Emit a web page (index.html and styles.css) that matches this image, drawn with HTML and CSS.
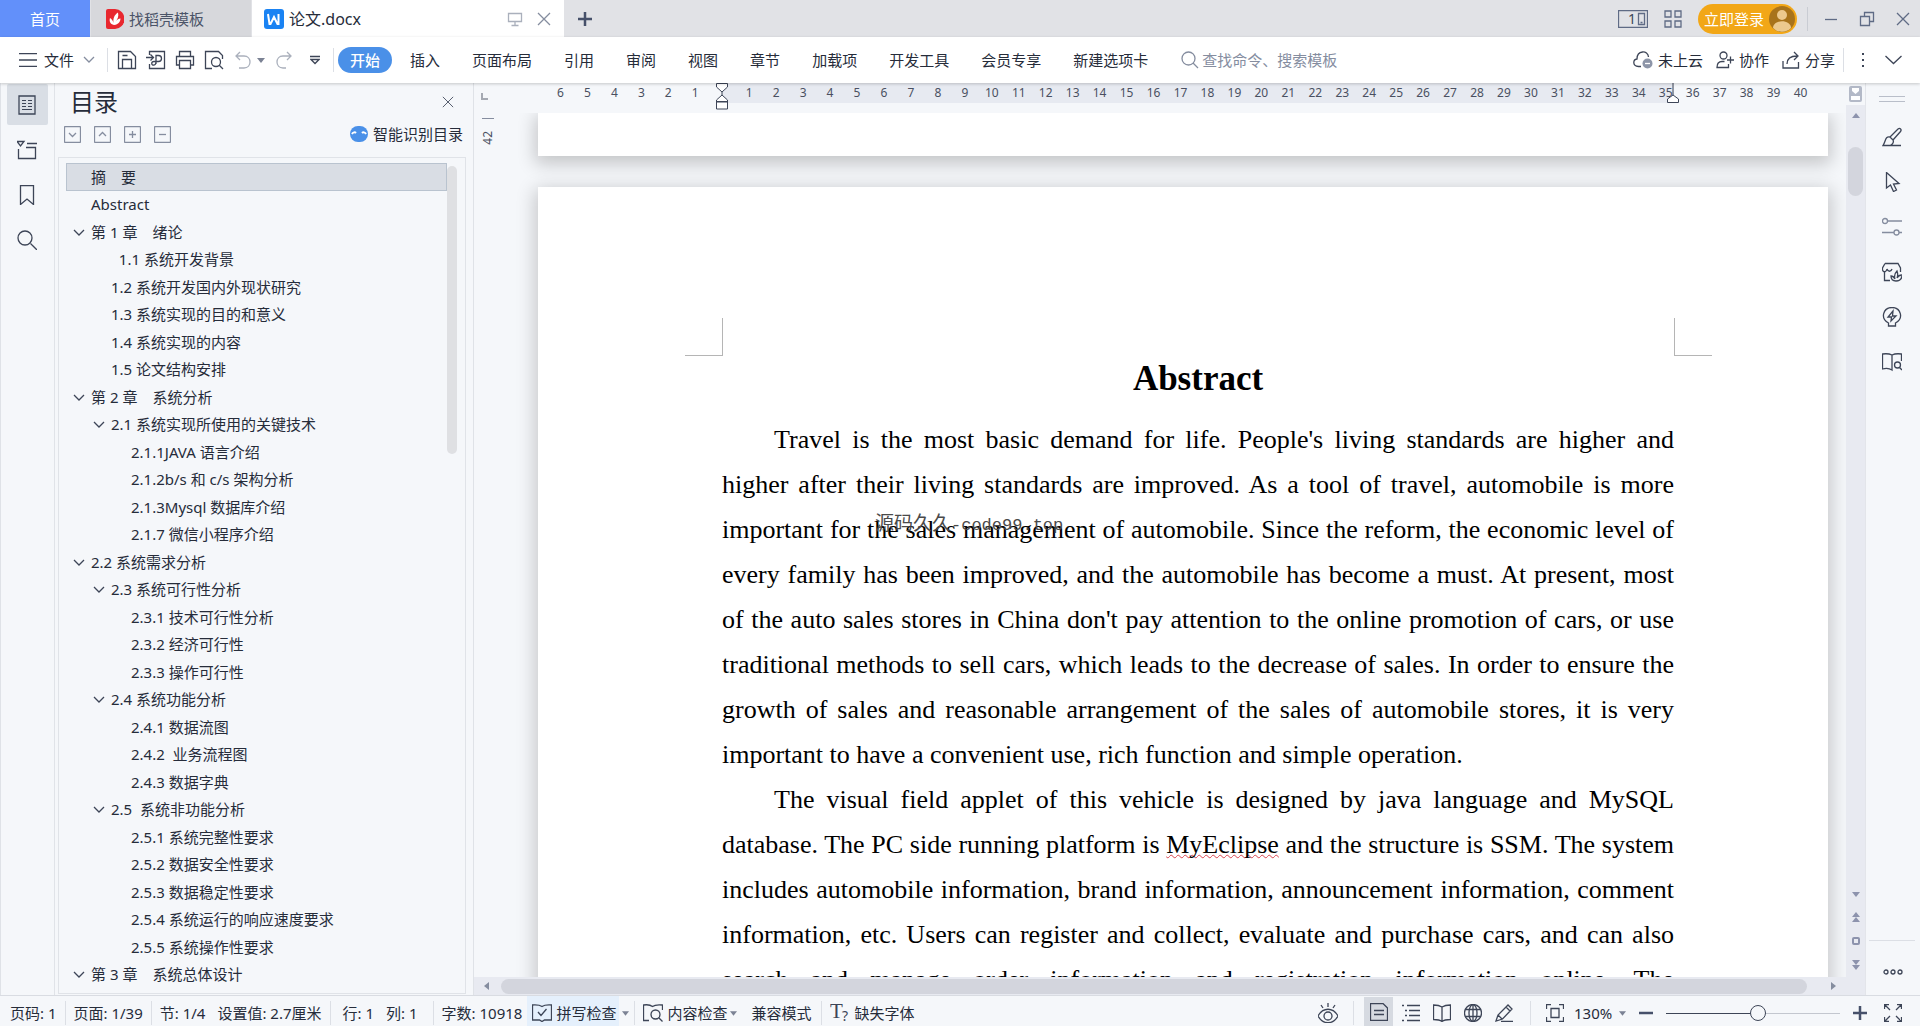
FILE: index.html
```html
<!DOCTYPE html>
<html lang="zh-CN">
    <head>
        <meta charset="utf-8">
        <title>论文.docx</title>
        <link rel="stylesheet" href="styles.css">
    </head>
    <body>
        <svg class="defs" aria-hidden="true">
            <symbol id="down" viewBox="0 0 12 8"><path d="M1 1l5 5 5-5"/></symbol>
            <symbol id="cross" viewBox="0 0 14 14"><path d="M1 1l12 12M13 1L1 13"/></symbol>
            <symbol id="caret" viewBox="0 0 8 5"><path d="M0 0h8L4 5z"/></symbol>
        </svg>

        <!-- 标签栏 -->
        <header class="titlebar">
            <button class="tab tab_home">首页</button>
            <button class="tab tab_template">
                <svg class="logo" viewBox="0 0 18 20"><path fill="#e8272f" d="M0 2a2 2 0 0 1 2-2h7a9.500 10 0 0 1 0 20H2a2 2 0 0 1-2-2z"/><path fill="#fff" d="M8 16c-4-1-5-4-4-7 2 1 3 3 3.500 5C7 10 8 6 12 3.500c1 4-.5 7-2.500 9 1-1.500 3-3 5-3 0 3-2 6-6.500 6.500z"/></svg>
                找稻壳模板
            </button>
            <div class="tab tab_active">
                <svg class="logo logo_w" viewBox="0 0 20 20"><rect width="20" height="20" rx="3" fill="#1a83f3"/><path fill="none" stroke="#fff" stroke-width="2" d="M4 5l1.500 10h1L10 8l3.500 7h1V5"/></svg>
                <span class="tab_name">论文.docx</span>
                <button class="plain" aria-label="在窗口中显示"><svg class="ico pale" viewBox="0 0 16 16" width="16" height="16"><path d="M1.500 2.500h13v8h-13zM8 10.500v4M4.500 14.500h7"/></svg></button>
                <button class="plain" aria-label="关闭标签"><svg class="ico gray" width="14" height="14"><use href="#cross"/></svg></button>
            </div>
            <button class="plain new_tab" aria-label="新建"><svg class="ico thick" viewBox="0 0 14 14" width="14" height="14"><path d="M7 0v14M0 7h14"/></svg></button>
            <div class="window_tools">
                <button class="plain" aria-label="窗口布局"><svg class="ico slate" viewBox="0 0 30 18" width="30" height="18"><path d="M.5.500h29v17H.5zM20.500 3.500h6v11h-6zM22.500 12.500h2"/><text class="glyph" x="10" y="14">1</text></svg></button>
                <button class="plain" aria-label="应用"><svg class="ico slate" viewBox="0 0 18 18" width="18" height="18"><path d="M1 1h6v6H1zM11 1h6v6h-6zM1 11h6v6H1zM11 11h6v6h-6z"/></svg></button>
                <button class="login">立即登录
                    <svg viewBox="0 0 26 26" width="26" height="26"><circle cx="13" cy="13" r="13" fill="#a8731b"/><circle cx="13" cy="9" r="5" fill="#ecc98e"/><path fill="#ecc98e" d="M4 22c0-9 18-9 18 0-5 5-13 5-18 0z"/></svg>
                </button>
                <i class="sep"></i>
                <button class="plain" aria-label="最小化"><svg class="ico slate" viewBox="0 0 14 14" width="14" height="14"><path d="M1 7.500h12"/></svg></button>
                <button class="plain" aria-label="还原"><svg class="ico slate" viewBox="0 0 16 16" width="16" height="16"><path d="M1.500 5.500h9v9h-9zM5.500 5.500v-4h9v9h-4"/></svg></button>
                <button class="plain" aria-label="关闭"><svg class="ico slate" width="14" height="14"><use href="#cross"/></svg></button>
            </div>
        </header>

        <!-- 菜单 -->
        <nav class="menubar">
            <button class="plain file_menu">
                <svg class="ico" viewBox="0 0 18 14" width="18" height="14"><path d="M0 .5h18M0 7h18M0 13.500h18"/></svg>
                文件
                <svg class="ico gray" width="12" height="8"><use href="#down"/></svg>
            </button>
            <i class="sep"></i>
            <div class="quick">
                <button class="plain" aria-label="保存"><svg class="ico" viewBox="0 0 20 20" width="20" height="20"><path d="M1.500 1.500h12l5 5v12h-17zM5.500 18v-8.500h9V18M5.500 5.500h5"/></svg></button>
                <button class="plain" aria-label="输出为PDF"><svg class="ico" viewBox="0 0 20 20" width="20" height="20"><path d="M3.500 5V1.500h15v17h-15V14M0 7.500h7M4.500 4.500l3 3-3 3M10 14V5.500h2.500c4 0 4 6 0 6H8c-3 0-3 4 0 3.500 2 0 2-2 2-4"/></svg></button>
                <button class="plain" aria-label="打印"><svg class="ico" viewBox="0 0 20 20" width="20" height="20"><path d="M4.500 6V1.500h11V6M4.500 15h-3V6.500h17V15h-3M4.500 10.500h11v8h-11z"/></svg></button>
                <button class="plain" aria-label="打印预览"><svg class="ico" viewBox="0 0 20 20" width="20" height="20"><path d="M8 18.500H1.500v-17h13l4 4V9M15 15l4 4"/><circle cx="12" cy="12" r="4.500"/></svg></button>
                <div class="undo">
                    <button class="plain" aria-label="撤销"><svg class="ico pale" viewBox="0 0 16 18" width="16" height="18"><path d="M5 1L1 5l4 4M1 5h8c8 0 8 12 0 12H4"/></svg></button>
                    <button class="plain" aria-label="撤销列表"><svg class="fill" width="8" height="5"><use href="#caret"/></svg></button>
                </div>
                <button class="plain" aria-label="恢复"><svg class="ico pale" viewBox="0 0 16 18" width="16" height="18"><path d="M11 1l4 4-4 4M15 5H7c-8 0-8 12 0 12h3"/></svg></button>
                <button class="plain" aria-label="自定义快速访问"><svg class="ico" viewBox="0 0 10 10" width="10" height="10"><path d="M0 1.500h10M1 4.500l4 4 4-4z"/></svg></button>
            </div>
            <i class="sep"></i>
            <div class="menu_tabs">
                <button class="plain current">开始</button>
                <button class="plain">插入</button>
                <button class="plain">页面布局</button>
                <button class="plain">引用</button>
                <button class="plain">审阅</button>
                <button class="plain">视图</button>
                <button class="plain">章节</button>
                <button class="plain">加载项</button>
                <button class="plain">开发工具</button>
                <button class="plain">会员专享</button>
                <button class="plain">新建选项卡</button>
            </div>
            <label class="search">
                <svg class="ico gray" viewBox="0 0 18 18" width="18" height="18"><circle cx="7.500" cy="7.500" r="6.500"/><path d="M12 12l5 5"/></svg>
                <input type="text" placeholder="查找命令、搜索模板" aria-label="查找命令、搜索模板">
            </label>
            <div class="share_tools">
                <button class="plain"><svg class="ico" viewBox="0 0 20 18" width="20" height="18"><path d="M8 15.500H5.500C-1 15 0 8.500 4 8 4-1 15-1 15.500 6"/><circle cx="14.500" cy="12.500" r="5" fill="#8d95a8" stroke="none"/><path stroke="#fff" d="M12 12.500h5"/></svg>未上云</button>
                <button class="plain"><svg class="ico" viewBox="0 0 18 18" width="18" height="18"><circle cx="7.500" cy="4.500" r="3.500"/><path d="M12.500 13v3.500H1C1 12 3 10.500 6 10.500h2.500M14.500 5.500v7M11 9h7"/></svg>协作</button>
                <button class="plain"><svg class="ico" viewBox="0 0 18 18" width="18" height="18"><path d="M1 10v7h15.500v-6M5 13c0-6 4-8 10-8M12 1l4 4-4 4"/></svg>分享</button>
            </div>
            <i class="sep"></i>
            <button class="plain" aria-label="更多"><svg class="dots" viewBox="0 0 4 16" width="4" height="16"><path d="M1 1h2v2H1zM1 7h2v2H1zM1 13h2v2H1z"/></svg></button>
            <button class="plain fold" aria-label="折叠功能区"><svg class="ico" viewBox="0 0 17 10" width="17" height="10"><path d="M.5 1l8 7.500 8-7.500"/></svg></button>
        </nav>

        <main class="workspace">
            <nav class="rail rail_left">
                <button class="plain on" aria-label="目录"><svg class="ico" viewBox="0 0 18 20" width="18" height="20"><path d="M1 1h16v18H1z"/><path stroke-width="1" d="M4 5.500h4M10 5.500h4M4 8.500h4M10 8.500h4M4 11.500h4M10 11.500h4M4 14.500h10"/></svg></button>
                <button class="plain" aria-label="导航"><svg class="ico" viewBox="0 0 20 20" width="20" height="20"><path d="M0 1.500h7L3.500 6zM10 3.500h10M1.500 9v9.500h17v-11H9"/></svg></button>
                <button class="plain" aria-label="书签"><svg class="ico" viewBox="0 0 16 20" width="16" height="20"><path d="M1.500.500h13v19L8 14l-6.500 5.500z"/></svg></button>
                <button class="plain" aria-label="查找"><svg class="ico" viewBox="0 0 20 20" width="20" height="20"><circle cx="8" cy="8" r="7"/><path d="M13.500 13.500L20 20"/></svg></button>
            </nav>

            <aside class="outline">
                <div class="outline_head">
                    <h2>目录</h2>
                    <button class="plain" aria-label="关闭目录"><svg class="ico hair" width="12" height="12"><use href="#cross"/></svg></button>
                </div>
                <div class="outline_tools">
                    <button class="plain" aria-label="展开"><svg class="ico gray" viewBox="0 0 17 17" width="17" height="17"><rect x=".5" y=".5" width="16" height="16" rx="1"/><path d="M5 7l3.500 3.500L12 7"/></svg></button>
                    <button class="plain" aria-label="折叠"><svg class="ico gray" viewBox="0 0 17 17" width="17" height="17"><rect x=".5" y=".5" width="16" height="16" rx="1"/><path d="M5 10l3.500-3.500L12 10"/></svg></button>
                    <button class="plain" aria-label="增加级别"><svg class="ico gray" viewBox="0 0 17 17" width="17" height="17"><rect x=".5" y=".5" width="16" height="16" rx="1"/><path d="M5 8.500h7M8.500 5v7"/></svg></button>
                    <button class="plain" aria-label="减少级别"><svg class="ico gray" viewBox="0 0 17 17" width="17" height="17"><rect x=".5" y=".5" width="16" height="16" rx="1"/><path d="M5 8.500h7"/></svg></button>
                    <button class="plain smart"><svg viewBox="0 0 18 16" width="18" height="16"><rect width="18" height="16" rx="8" fill="#4a90e8"/><path fill="none" stroke="#fff" stroke-width="2" d="M2 8c1-2 3-2 4-1M12 7c1-1 3-1 4 1"/></svg>智能识别目录</button>
                </div>
                <div class="tree_box">
                    <ul class="tree">
                        <li class="selected"><a href="#abstract">摘　要</a></li>
                        <li><a href="#abstract">Abstract</a></li>
                        <li class="open"><a href="#c1"><svg class="ico" width="12" height="8"><use href="#down"/></svg>第 1 章　绪论</a></li>
                        <li class="lv2"><a href="#c1">&nbsp; 1.1 系统开发背景</a></li>
                        <li class="lv2"><a href="#c1">1.2 系统开发国内外现状研究</a></li>
                        <li class="lv2"><a href="#c1">1.3 系统实现的目的和意义</a></li>
                        <li class="lv2"><a href="#c1">1.4 系统实现的内容</a></li>
                        <li class="lv2"><a href="#c1">1.5 论文结构安排</a></li>
                        <li class="open"><a href="#c2"><svg class="ico" width="12" height="8"><use href="#down"/></svg>第 2 章　系统分析</a></li>
                        <li class="lv2 open"><a href="#c2"><svg class="ico" width="12" height="8"><use href="#down"/></svg>2.1 系统实现所使用的关键技术</a></li>
                        <li class="lv3"><a href="#c2">2.1.1JAVA 语言介绍</a></li>
                        <li class="lv3"><a href="#c2">2.1.2b/s 和 c/s 架构分析</a></li>
                        <li class="lv3"><a href="#c2">2.1.3Mysql 数据库介绍</a></li>
                        <li class="lv3"><a href="#c2">2.1.7 微信小程序介绍</a></li>
                        <li class="open"><a href="#c2"><svg class="ico" width="12" height="8"><use href="#down"/></svg>2.2 系统需求分析</a></li>
                        <li class="lv2 open"><a href="#c2"><svg class="ico" width="12" height="8"><use href="#down"/></svg>2.3 系统可行性分析</a></li>
                        <li class="lv3"><a href="#c2">2.3.1 技术可行性分析</a></li>
                        <li class="lv3"><a href="#c2">2.3.2 经济可行性</a></li>
                        <li class="lv3"><a href="#c2">2.3.3 操作可行性</a></li>
                        <li class="lv2 open"><a href="#c2"><svg class="ico" width="12" height="8"><use href="#down"/></svg>2.4 系统功能分析</a></li>
                        <li class="lv3"><a href="#c2">2.4.1 数据流图</a></li>
                        <li class="lv3"><a href="#c2">2.4.2 &nbsp;业务流程图</a></li>
                        <li class="lv3"><a href="#c2">2.4.3 数据字典</a></li>
                        <li class="lv2 open"><a href="#c2"><svg class="ico" width="12" height="8"><use href="#down"/></svg>2.5 &nbsp;系统非功能分析</a></li>
                        <li class="lv3"><a href="#c2">2.5.1 系统完整性要求</a></li>
                        <li class="lv3"><a href="#c2">2.5.2 数据安全性要求</a></li>
                        <li class="lv3"><a href="#c2">2.5.3 数据稳定性要求</a></li>
                        <li class="lv3"><a href="#c2">2.5.4 系统运行的响应速度要求</a></li>
                        <li class="lv3"><a href="#c2">2.5.5 系统操作性要求</a></li>
                        <li class="open"><a href="#c3"><svg class="ico" width="12" height="8"><use href="#down"/></svg>第 3 章　系统总体设计</a></li>
                    </ul>
                    <div class="tree_scroll"><i></i></div>
                </div>
            </aside>

            <section class="document">
                <div class="ruler_row">
                    <i class="tab_mark"></i>
                    <div class="ruler">
                        <span>6</span><span>5</span><span>4</span><span>3</span><span>2</span><span>1</span>
                        <span class="zero"><svg viewBox="0 0 12 27" width="12" height="27"><path d="M.5.500h11V4L6 9 .5 4zM6 9v3l5.500 5v2H.5v-2L6 12M.5 18.500h11v7.500H.5z"/></svg></span>
                        <span>1</span><span>2</span><span>3</span><span>4</span><span>5</span><span>6</span><span>7</span><span>8</span><span>9</span><span>10</span>
                        <span>11</span><span>12</span><span>13</span><span>14</span><span>15</span><span>16</span><span>17</span><span>18</span><span>19</span><span>20</span>
                        <span>21</span><span>22</span><span>23</span><span>24</span><span>25</span><span>26</span><span>27</span><span>28</span><span>29</span><span>30</span>
                        <span>31</span><span>32</span><span>33</span><span>34</span><span>35</span><span>36</span><span>37</span><span>38</span><span>39</span><span>40</span>
                        <svg class="right_indent" viewBox="0 0 12 20" width="12" height="20"><path d="M6 0v12l5.500 4v3.500H.5V16L6 12"/></svg>
                    </div>
                </div>
                <div class="view">
                    <div class="side_ruler"><i></i><span>42</span></div>
                    <div class="pages">
                        <div class="page page_prev"></div>
                        <article class="page" id="abstract">
                            <i class="corner corner_left"></i>
                            <i class="corner corner_right"></i>
                            <h1>Abstract</h1>
                            <p>Travel is the most basic demand for life. People's living standards are higher and higher after their living standards are improved. As a tool of travel, automobile is more important for the sales management of automobile. Since the reform, the economic level of every family has been improved, and the automobile has become a must. At present, most of the auto sales stores in China don't pay attention to the online promotion of cars, or use traditional methods to sell cars, which leads to the decrease of sales. In order to ensure the growth of sales and reasonable arrangement of the sales of automobile stores, it is very important to have a convenient use, rich function and simple operation.</p>
                            <p class="cut">The visual field applet of this vehicle is designed by java language and MySQL database. The PC side running platform is <span class="typo">MyEclipse</span> and the structure is SSM. The system includes automobile information, brand information, announcement information, comment information, etc. Users can register and collect, evaluate and purchase cars, and can also search and manage order information and registration information online. The</p>
                            <div class="watermark">源码久久<span>-code99.top</span></div>
                        </article>
                    </div>
                </div>
                <div class="hscroll">
                    <svg viewBox="0 0 5 8" width="5" height="8"><path d="M5 0v8L0 4z"/></svg>
                    <i></i>
                    <svg viewBox="0 0 5 8" width="5" height="8"><path d="M0 0v8l5-4z"/></svg>
                </div>
            </section>

            <div class="vscroll">
                <svg class="ruler_toggle" viewBox="0 0 13 16" width="13" height="16"><rect width="13" height="16" rx="2" fill="#b3b9c7"/><path fill="#fff" d="M3 2h7v3L6.500 8 3 5zM2 10h9v4H2z"/></svg>
                <div class="vtrack">
                    <svg class="up" viewBox="0 0 8 5" width="8" height="5"><path d="M0 5h8L4 0z"/></svg>
                    <i></i>
                    <div class="jump">
                        <svg width="8" height="5"><use href="#caret"/></svg>
                        <svg viewBox="0 0 8 10" width="8" height="10"><path d="M0 5h8L4 0zM0 10h8L4 5z"/></svg>
                        <svg class="ring" viewBox="0 0 8 8" width="8" height="8"><rect x="1" y="1" width="6" height="6" rx="1"/></svg>
                        <svg viewBox="0 0 8 10" width="8" height="10"><path d="M0 0h8L4 5zM0 5h8l-4 5z"/></svg>
                    </div>
                </div>
            </div>

            <nav class="rail rail_right">
                <i class="grip"></i>
                <button class="plain" aria-label="格式"><svg class="ico" viewBox="0 0 20 20" width="20" height="20"><path d="M8 10l8-8c2-1.500 4 .5 2.500 2.500L11 13M8 10c-5-1-4 4-7 8.500h7c3-1 4-4 3-5.500zM1 18.500h18"/></svg></button>
                <button class="plain" aria-label="选择"><svg class="ico" viewBox="0 0 20 20" width="20" height="20"><path d="M4.500.500v15.500l4-3 3 6.500 3-1.500-3-6 5.500-.5z"/></svg></button>
                <button class="plain" aria-label="属性"><svg class="ico gray" viewBox="0 0 20 20" width="20" height="20"><circle cx="3" cy="4" r="2.500"/><path d="M5.500 4H20M0 15.500h12M17 15.500h3"/><circle cx="14.500" cy="15.500" r="2.500"/></svg></button>
                <button class="plain" aria-label="素材"><svg class="ico" viewBox="0 0 20 20" width="20" height="20"><path d="M2.500 9v9.500H8M3 1.500h13L18.500 6v4M3 1.500L.5 6v2c1 3 4 2 4.500-1 1 3 4 3 5 0"/><path d="M14 19c-4 0-5-3-5-5 2 0 3 1 4 3-1-3 0-6 2-8 1 3 1 5 0 7 1-2 3-3 5-3 0 4-2 6-6 6z"/></svg></button>
                <button class="plain" aria-label="灵感"><svg class="ico" viewBox="0 0 20 20" width="20" height="20"><path d="M6.500 16C-2 11.500 1 .5 10 .5s12 11 3.500 15.500v3h-7z"/><path d="M11 4L6 10h3.500L9 14l5-5h-3.500z"/></svg></button>
                <button class="plain" aria-label="阅读"><svg class="ico" viewBox="0 0 20 20" width="20" height="20"><path d="M10 18c-3-2-6-2-9.500-1V2C4 1.500 7 1.500 10 3zM10 3c3-1.500 6-1.500 9.500-1v7M17.500 15.500L20 18"/><circle cx="15.500" cy="13" r="3"/></svg></button>
                <div class="rail_end">
                    <button class="plain" aria-label="更多"><svg class="ico" viewBox="0 0 20 6" width="20" height="6"><circle cx="3" cy="3" r="2"/><circle cx="10" cy="3" r="2"/><circle cx="17" cy="3" r="2"/></svg></button>
                </div>
            </nav>
        </main>

        <!-- 状态栏 -->
        <footer class="statusbar">
            <span>页码: 1</span>
            <i class="sep"></i>
            <span>页面: 1/39</span>
            <i class="sep"></i>
            <span>节: 1/4</span>
            <span class="more">设置值: 2.7厘米</span>
            <i class="sep"></i>
            <span class="more">行: 1</span>
            <span class="more column">列: 1</span>
            <i class="sep"></i>
            <span>字数: 10918</span>
            <button class="plain spell"><svg class="ico" viewBox="0 0 20 18" width="20" height="18"><path d="M10 2.500C7 .5 4 1 .5 1v15h7l2.500 1.500 2.500-1.500h7V1c-3.500 0-6.500-.5-9.500 1.500zM6 8l3 3.500L14.500 5"/></svg>拼写检查</button>
            <svg class="fill" width="7" height="5"><use href="#caret"/></svg>
            <i class="sep"></i>
            <button class="plain"><svg class="ico" viewBox="0 0 20 18" width="20" height="18"><path d="M6 16.500H.5V1C4 .5 7 .5 9.500 2.500 12 .5 15 .5 19.500 1v5M16 14l3.500 3.500"/><circle cx="12.500" cy="10.500" r="4.500"/></svg>内容检查</button>
            <svg class="fill" width="7" height="5"><use href="#caret"/></svg>
            <button class="plain compat">兼容模式</button>
            <i class="sep"></i>
            <button class="plain"><svg class="ico" viewBox="0 0 20 20" width="20" height="20"><text class="glyph glyph_t" x="0" y="15">T</text><text class="glyph" x="12" y="18">?</text></svg>缺失字体</button>

            <div class="view_tools">
                <button class="plain" aria-label="护眼模式"><svg class="ico" viewBox="0 0 20 20" width="20" height="20"><path d="M0 13c5-9 15-9 20 0-5 9-15 9-20 0zM10 0v4M3 2l2 3M17 2l-2 3"/><circle cx="10" cy="13" r="4"/></svg></button>
                <i class="sep"></i>
                <button class="plain on" aria-label="页面视图"><svg class="ico" viewBox="0 0 18 18" width="18" height="18"><path d="M.5.500H13L17.500 5v12.500H.5zM4 7.500h10M4 11.500h10"/></svg></button>
                <button class="plain" aria-label="大纲"><svg class="ico" viewBox="0 0 18 18" width="18" height="18"><path d="M0 1.500h2M5 1.500h13M3 6.500h2M7 6.500h11M3 11.500h2M7 11.500h11M0 16.500h2M5 16.500h13"/></svg></button>
                <button class="plain" aria-label="阅读版式"><svg class="ico" viewBox="0 0 18 18" width="18" height="18"><path d="M9 3C6 1 3 1 .5 1v14.500c3 0 6 0 8.500 2 2.500-2 5.500-2 8.500-2V1C15 1 12 1 9 3zM9 3v14"/></svg></button>
                <button class="plain" aria-label="Web版式"><svg class="ico" viewBox="0 0 18 18" width="18" height="18"><circle cx="9" cy="9" r="8.500"/><ellipse cx="9" cy="9" rx="4" ry="8.500"/><path d="M9 0v18M1 5.500h16M1 12.500h16"/></svg></button>
                <button class="plain" aria-label="写作模式"><svg class="ico" viewBox="0 0 20 18" width="20" height="18"><path d="M1 17l2-6L13 1l4 4-9.500 10zM3 11l4 4M6 17.500h12M11 3l4 4"/></svg></button>
                <i class="sep"></i>
                <button class="plain" aria-label="最佳显示比例"><svg class="ico" viewBox="0 0 18 18" width="18" height="18"><path d="M.5 5V.5H5M13 .5h4.500V5M17.500 13v4.500H13M5 17.500H.5V13M5 4.500h8v9H5z"/></svg></button>
                <label class="zoom">
                    <select aria-label="显示比例"><option>130%</option></select>
                    <svg class="fill" width="7" height="5"><use href="#caret"/></svg>
                </label>
                <button class="plain" aria-label="缩小"><svg class="ico thick" viewBox="0 0 14 14" width="14" height="14"><path d="M0 7h14"/></svg></button>
                <input class="slider" type="range" min="0" max="100" value="53" aria-label="缩放">
                <button class="plain" aria-label="放大"><svg class="ico thick" viewBox="0 0 14 14" width="14" height="14"><path d="M7 0v14M0 7h14"/></svg></button>
                <button class="plain full" aria-label="全屏"><svg class="ico" viewBox="0 0 18 18" width="18" height="18"><path d="M.5 5V.5H5M1 1l5 5M13 .5h4.500V5M17 1l-5 5M17.500 13v4.500H13M17 17l-5-5M5 17.500H.5V13M1 17l5-5"/></svg></button>
            </div>
        </footer>
    </body>
</html>
```
FILE: styles.css
```css
* {
    box-sizing: border-box;
}

body {
    margin: 0;
    height: 100vh;
    display: flex;
    flex-direction: column;
    overflow: hidden;
    background-color: #f5f7fa;
    color: #262c3a;
    font-family: "Noto Sans", "Noto Sans CJK SC", sans-serif;
    font-size: 15px;
    line-height: 20px;
}

button, input, select {
    font: inherit;
    color: inherit;
    border: 0;
    padding: 0;
    background: none;
}

svg {
    flex-shrink: 0;
}

.defs {
    position: absolute;
    width: 0;
    height: 0;
}

.plain {
    display: flex;
    align-items: center;
    justify-content: center;
    white-space: nowrap;
}

.ico {
    fill: none;
    stroke: #3d4557;
    stroke-width: 1.3;
}

.ico.gray {
    stroke: #858d9f;
}

.ico.pale {
    stroke: #aab0bc;
}

.ico.slate {
    stroke: #5f6b85;
}

.ico.hair {
    stroke-width: 1;
}

.ico.thick {
    stroke: #46506a;
    stroke-width: 2.5;
}

.glyph {
    fill: #3d4557;
    stroke: none;
    font-size: 14px;
}

.glyph_t {
    font-family: "Liberation Serif", serif;
    font-size: 21px;
}

.fill {
    fill: #7b8294;
}

.sep {
    width: 1px;
    height: 24px;
    background-color: #dcdfe5;
}

/* 标签栏 */
.titlebar {
    display: flex;
    align-items: center;
    height: 37px;
    background-color: #e1e2e6;
}

.tab {
    display: flex;
    align-items: center;
    align-self: stretch;
}

.tab_home {
    width: 90px;
    justify-content: center;
    background-color: #6290fa;
    color: #fff;
}

.tab_template {
    width: 160px;
    margin: 0 1px;
    padding-left: 15px;
    gap: 5px;
    background-color: #d7d8dc;
    color: #4b5468;
}

.tab_active {
    width: 312px;
    padding: 0 13px 0 12px;
    gap: 14px;
    background-color: #fff;
}

.logo {
    width: 18px;
    height: 20px;
}

.logo_w {
    width: 20px;
    margin-right: -9px;
}

.tab_name {
    flex: 1;
    font-size: 16px;
}

.new_tab {
    margin-left: 14px;
}

.window_tools {
    display: flex;
    align-items: center;
    gap: 16px;
    margin-left: auto;
    padding-right: 10px;
}

.window_tools .sep {
    margin-left: -6px;
    background-color: #c9ccd3;
}

.window_tools .sep ~ .plain:not(:last-child) {
    margin-right: 5px;
}

.login {
    display: flex;
    align-items: center;
    gap: 5px;
    height: 30px;
    padding: 0 2px 0 6px;
    border-radius: 15px;
    background-color: #f2a717;
    color: #fff;
}

/* 菜单 */
.menubar {
    position: relative;
    z-index: 2;
    display: flex;
    align-items: center;
    height: 46px;
    padding: 0 18px 0 19px;
    background-color: #fff;
    box-shadow: 0 1px 3px rgba(0, 0, 0, 0.2);
}

.file_menu {
    gap: 7px;
    margin-right: 12px;
}

.file_menu .gray {
    margin-left: 2px;
}

.quick {
    display: flex;
    align-items: center;
    gap: 9px;
    margin: 0 13px 0 9px;
}

.undo {
    display: flex;
    gap: 6px;
    margin: 0 2px;
}

.quick > .plain:last-child {
    margin-left: 9px;
}

.menu_tabs {
    display: flex;
    align-items: center;
    gap: 32px;
    margin-left: 4px;
}

.menu_tabs .current {
    height: 26px;
    padding: 0 12px;
    margin-right: -14px;
    border-radius: 13px;
    background-color: #4a90e8;
    color: #fff;
    font-weight: 500;
}

.search {
    display: flex;
    align-items: center;
    flex: 1;
    gap: 3px;
    margin-left: 33px;
}

.search input {
    flex: 1;
    min-width: 0;
}

.search input::placeholder {
    color: #858d9f;
    opacity: 1;
}

.share_tools {
    display: flex;
    gap: 13px;
    margin-right: 8px;
}

.share_tools .plain {
    gap: 5px;
}

.dots {
    fill: #3d4557;
    margin: 0 20px 0 17px;
}

/* 工作区 */
.workspace {
    flex: 1;
    min-height: 0;
    display: flex;
}

.rail {
    display: flex;
    flex-direction: column;
    align-items: center;
    width: 54px;
}

.rail_left {
    gap: 4px;
    padding: 1px 1px 0 0;
    border-left: 1px solid #dfe2e7;
}

.rail .plain {
    width: 41px;
    height: 41px;
}

.rail .on {
    background-color: #d9dee5;
    border-radius: 2px;
}

.rail_right {
    width: 55px;
    padding: 13px 2px 0 0;
    gap: 4px;
    border-left: 1px solid #e3e5ea;
}

.grip {
    width: 26px;
    height: 6px;
    margin-bottom: 10px;
    border-top: 1px solid #b9bec9;
    border-bottom: 1px solid #b9bec9;
}

.rail_end {
    width: 46px;
    margin-top: auto;
    padding: 10px 3px 3px;
    border-top: 1px solid #dcdfe5;
}

.outline {
    display: flex;
    flex-direction: column;
    width: 420px;
    border-left: 1px solid #e0e3e8;
    border-right: 1px solid #dfe2e7;
    padding: 2px 7px 1px 3px;
}

.outline_head {
    display: flex;
    justify-content: space-between;
    align-items: center;
    padding: 0 12px;
}

.outline_head h2 {
    margin: 0;
    font-size: 24px;
    font-weight: 400;
    line-height: 34px;
}

.outline_tools {
    display: flex;
    align-items: center;
    gap: 13px;
    height: 30px;
    padding: 0 3px 0 6px;
}

.smart {
    gap: 5px;
    margin-left: auto;
}

.tree_box {
    flex: 1;
    min-height: 0;
    display: flex;
    margin-top: 8px;
    padding: 5px 8px 5px 7px;
    border: 1px solid #e0e3e8;
}

.tree {
    flex: 1;
    display: grid;
    grid-auto-rows: 1fr;
    margin: 0;
    padding: 0;
    list-style: none;
}

.tree li {
    display: flex;
    align-items: center;
    padding-left: 25px;
}

.tree a {
    display: flex;
    align-items: center;
    color: inherit;
    text-decoration: none;
    white-space: pre;
}

.tree .selected {
    padding-left: 24px;
    border: 1px solid #b9c3cf;
    background-color: #d9dde4;
}

.tree .lv2 {
    padding-left: 45px;
}

.tree .lv3 {
    padding-left: 65px;
}

.tree .open svg {
    margin: 2px 6px 0 -18px;
}

.tree_scroll {
    width: 10px;
    padding-top: 3px;
}

.tree_scroll i {
    display: block;
    height: 35%;
    border-radius: 5px;
    background-color: #dfe0e3;
}

/* 文档 */
.document {
    flex: 1;
    min-width: 0;
    display: flex;
    flex-direction: column;
}

.ruler_row {
    position: relative;
    z-index: 1;
    display: flex;
    height: 30px;
    padding-right: 18px;
    background-color: #f5f7fa;
}

.tab_mark {
    width: 7px;
    height: 7px;
    margin: 10px 50px 0 7px;
    border-left: 2px solid #a5a9b2;
    border-bottom: 2px solid #a5a9b2;
}

.ruler {
    position: relative;
    flex: 1;
    display: grid;
    grid-template-columns: repeat(47, 1fr);
    height: 20px;
    padding: 0 14px 0 9px;
    background: linear-gradient(#e7eaf1, #e7eaf1) no-repeat 184px 0 / calc(100% - 338px) 20px;
    font-size: 12px;
    color: #4a5061;
    text-align: center;
}

.ruler svg {
    display: block;
    margin: 0 auto;
    fill: #fff;
    stroke: #3d4557;
}

.ruler .right_indent {
    position: absolute;
    top: 0;
    right: 149px;
}

.view {
    flex: 1;
    min-height: 0;
    display: flex;
    overflow: hidden;
    padding-right: 18px;
}

.side_ruler {
    width: 64px;
    padding: 5px 0 0 8px;
    font-size: 12px;
    color: #4a5061;
}

.side_ruler i {
    display: block;
    width: 12px;
    height: 1px;
    margin-bottom: 12px;
    background-color: #858d9f;
}

.side_ruler span {
    display: block;
    writing-mode: vertical-rl;
    transform: rotate(180deg);
    width: 12px;
    line-height: 12px;
}

.pages {
    flex: 1;
    min-width: 0;
}

.page {
    position: relative;
    padding: 168px 154px 100px 184px;
    background-color: #fff;
    box-shadow: 0 5px 18px 3px rgba(0, 0, 0, 0.2);
    color: #000;
    font-family: "Liberation Serif", serif;
    font-size: 26px;
    line-height: 45px;
}

.page_prev {
    height: 43px;
    padding: 0;
    margin-bottom: 31px;
}

.page h1 {
    margin: 0 0 14px;
    font-size: 35px;
    line-height: 48px;
    text-align: center;
}

.page p {
    margin: 0;
    text-align: justify;
    text-indent: 2em;
}

.page .cut {
    text-align-last: justify;
}

.typo {
    text-decoration: underline wavy #d8434e 1px;
    text-underline-offset: 1px;
    text-decoration-skip-ink: none;
}

.corner {
    position: absolute;
    top: 131px;
    width: 38px;
    height: 38px;
    border-bottom: 1px solid #b5b5b5;
}

.corner_left {
    left: 147px;
    border-right: 1px solid #b5b5b5;
}

.corner_right {
    right: 116px;
    border-left: 1px solid #b5b5b5;
}

.watermark {
    position: absolute;
    left: 337px;
    top: 323px;
    color: #4a4a4a;
    font-family: "Noto Sans CJK SC", sans-serif;
    font-size: 19px;
    line-height: 24px;
}

.watermark span {
    font-family: "Liberation Mono", monospace;
    font-size: 17px;
}

.hscroll {
    position: relative;
    display: flex;
    align-items: center;
    gap: 12px;
    height: 18px;
    padding: 0 10px;
    background-color: #e8eaf1;
    fill: #858d9f;
}

.hscroll i {
    flex: 1;
    height: 15px;
    margin-right: 12px;
    border-radius: 8px;
    background-color: #d3d5dd;
}

.vscroll {
    display: flex;
    flex-direction: column;
    align-items: center;
    width: 19px;
    fill: #8d93ad;
}

.ruler_toggle {
    margin: 3px 0;
}

.vtrack {
    flex: 1;
    width: 100%;
    display: flex;
    flex-direction: column;
    align-items: center;
    padding: 8px 0 25px;
    background-color: #e8eaf1;
}

.vtrack i {
    width: 15px;
    height: 49px;
    margin-top: 29px;
    border-radius: 8px;
    background-color: #d3d5dd;
}

.jump {
    display: flex;
    flex-direction: column;
    align-items: center;
    gap: 15px;
    margin-top: auto;
}

.ring {
    fill: none;
    stroke: #8d93ad;
    stroke-width: 2;
}

/* 状态栏 */
.statusbar {
    display: flex;
    align-items: center;
    gap: 8px;
    height: 31px;
    padding: 4px 18px 0 10px;
    border-top: 1px solid #d9dce2;
    white-space: nowrap;
}

.statusbar > .more {
    margin-left: 4px;
}

.statusbar > .column {
    margin-right: 7px;
}

.statusbar > .plain {
    gap: 4px;
}

.statusbar > .fill {
    margin: 0 -3px 0 -5px;
}

.statusbar .spell {
    align-self: stretch;
    margin: -4px 0 0 -3px;
    padding: 4px 3px 0 5px;
    background-color: #e5f0fc;
}

.compat {
    padding: 0 2px 0 9px;
}

.view_tools {
    display: flex;
    align-items: center;
    gap: 13px;
    margin-left: auto;
    align-self: stretch;
}

.view_tools .sep {
    margin: 0 2px;
}

.view_tools .on {
    align-self: stretch;
    width: 29px;
    margin: -3px -4px 0 -5px;
    background-color: #d6dae1;
}

.zoom {
    display: flex;
    align-items: center;
    gap: 5px;
    margin-left: -3px;
}

.zoom select {
    width: 40px;
    appearance: none;
}

.slider {
    width: 174px;
    height: 20px;
    margin: 0;
    appearance: none;
}

.slider::-webkit-slider-runnable-track {
    height: 1px;
    background: linear-gradient(90deg, #3d4557 50%, #c3c7cf 50%);
}

.slider::-webkit-slider-thumb {
    appearance: none;
    width: 16px;
    height: 16px;
    margin-top: -8px;
    border: 1px solid #3d4557;
    border-radius: 8px;
    background-color: #f5f7fa;
}

.full {
    margin-left: 4px;
}
```
